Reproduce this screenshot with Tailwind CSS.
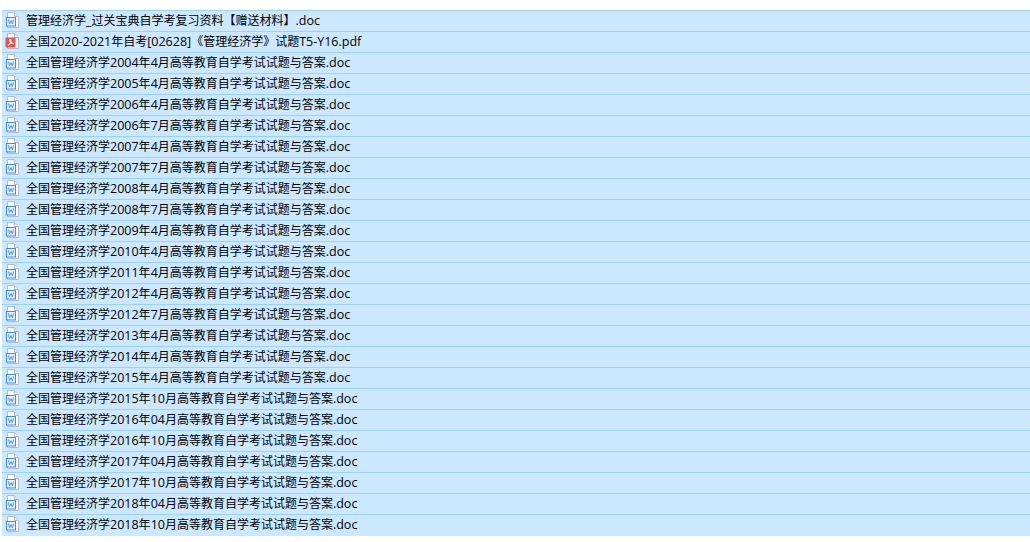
<!DOCTYPE html>
<html lang="zh">
<head>
<meta charset="UTF-8" />
<title>管理经济学</title>
<script src="https://cdn.jsdelivr.net/npm/@tailwindcss/browser@4"></script>
</head>
<body class="bg-white text-black overflow-hidden">
<svg width="0" height="0" class="absolute">
  <symbol id="doc" viewBox="0 0 16 16">
    <path d="M2.5 .5H9.5L13.5 4.5V15.5H2.5Z" fill="#fbfcfe" stroke="#b4bcc9"/>
    <path d="M9.5 .5V4.5H13.5" fill="#e6ebf2" stroke="#b4bcc9"/>
    <rect x="1.5" y="5.5" width="9" height="8.5" fill="#e4f0fd" stroke="#3f8cf0"/>
    <path d="M3.4 7.4L4.6 11.8L6 8.6L7.4 11.8L8.6 7.4" fill="none" stroke="#3f8cf0" stroke-width="0.9"/>
  </symbol>
  <symbol id="pdf" viewBox="0 0 16 16">
    <path d="M2.5 .5H9.5L13.5 4.5V15.5H2.5Z" fill="#fbfbfb" stroke="#b4b4bc"/>
    <path d="M9.5 .5V4.5H13.5" fill="#eeeaea" stroke="#b4b4bc"/>
    <rect x="0.5" y="4.5" width="10" height="10" rx="1" fill="#e9504f"/>
    <path d="M3 12.5C4.5 11.5 6 9 6 7A1 1 0 0 0 4.5 7C4.5 9 6.5 10.5 8.5 10.2" fill="none" stroke="#fff" stroke-width="1.1"/>
  </symbol>
</svg>
<div id="list" class="mt-[10px] ml-[2px] w-[1028px] text-[12px] leading-[20px] font-['Open_Sans','Noto_Sans_CJK_SC',sans-serif]"></div>
<script>
  var dates = ['2004年4月','2005年4月','2006年4月','2006年7月','2007年4月','2007年7月','2008年4月','2008年7月','2009年4月','2010年4月','2011年4月','2012年4月','2012年7月','2013年4月','2014年4月','2015年4月','2015年10月','2016年04月','2016年10月','2017年04月','2017年10月','2018年04月','2018年10月'];
  var files = ['管理经济学_过关宝典自学考复习资料【赠送材料】.doc','全国2020-2021年自考[02628]《管理经济学》试题T5-Y16.pdf'];
  dates.forEach(function (d) { files.push('全国管理经济学' + d + '高等教育自学考试试题与答案.doc'); });

  // latin runs are set a little larger, CJK stays on the 12px grid
  document.getElementById('list').innerHTML = files.map(function (name, i) {
    var icon = name.endsWith('.pdf') ? '#pdf' : '#doc';
    var label = name.replace(/[\x20-\x7e]+/g, '<span class="text-[12.5px]">$&</span>');
    var rowClass = i === files.length - 1
      ? 'h-[22px] pb-[1px] flex items-center gap-[5px] pl-[3px] bg-[#cce8ff] border-t border-[#99d1ff]'
      : 'h-[21px] flex items-center gap-[5px] pl-[3px] bg-[#cce8ff] border-t border-[#99d1ff]';
    return '<div class="' + rowClass + '"><svg class="w-4 h-4 shrink-0 mb-[2px]"><use href="' + icon + '"/></svg><span>' + label + '</span></div>';
  }).join('');
</script>
</body>
</html>
